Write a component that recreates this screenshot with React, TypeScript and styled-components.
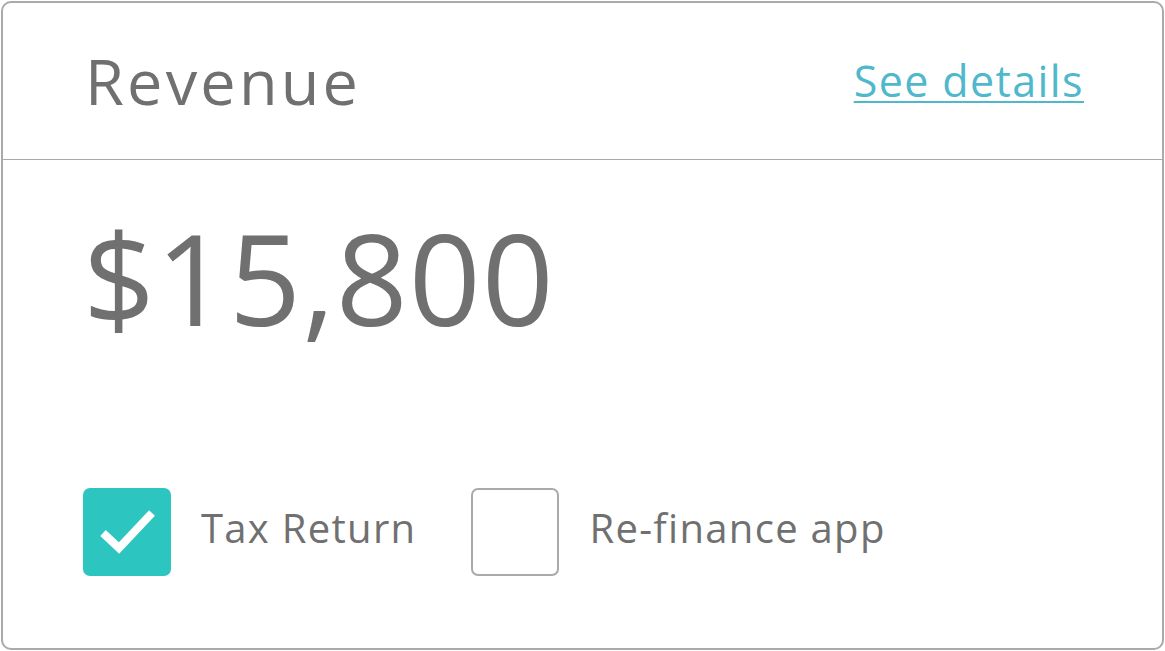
import styled, { createGlobalStyle } from "styled-components";

const GlobalStyle = createGlobalStyle`
  html, body {
    margin: 0;
    padding: 0;
    background: #fff;
  }
  body {
    font-family: "Open Sans", "Liberation Sans", sans-serif;
    color: #707070;
  }
`;

const options = [
  { label: "Tax Return", checked: true },
  { label: "Re-finance app", checked: false },
];

export default function App() {
  return (
    <>
      <GlobalStyle />
      <Card>
        <Header>
          <Title>Revenue</Title>
          <DetailsLink href="#">See details</DetailsLink>
        </Header>
        <Body>
          <Amount>$15,800</Amount>
          <Options>
            {options.map((o) => (
              <Option key={o.label}>
                <Box $checked={o.checked}>
                  {o.checked && (
                    <svg width="88" height="88" viewBox="0 0 88 88">
                      <path
                        d="M20 45 L36 60 L69 25"
                        fill="none"
                        stroke="#fff"
                        strokeWidth="8"
                      />
                    </svg>
                  )}
                </Box>
                <Label>{o.label}</Label>
              </Option>
            ))}
          </Options>
        </Body>
      </Card>
    </>
  );
}

const Card = styled.div`
  box-sizing: border-box;
  margin: 1px;
  width: 1163px;
  height: 649px;
  border: 2px solid #aaaaaa;
  border-radius: 10px;
  display: flex;
  flex-direction: column;
`;

const Header = styled.div`
  box-sizing: border-box;
  height: 157px;
  border-bottom: 1px solid #aaaaaa;
  display: flex;
  align-items: center;
  justify-content: space-between;
  padding: 0 78px 2px 82px;
`;

const Title = styled.h1`
  margin: 0;
  font-size: 63px;
  font-weight: 400;
  letter-spacing: 3.2px;
  color: #707070;
`;

const DetailsLink = styled.a`
  font-size: 43px;
  color: #4fb8cc;
  text-decoration: underline;
  text-decoration-thickness: 2px;
  text-underline-offset: 4px;
  letter-spacing: 1.4px;
`;

const Body = styled.div`
  flex: 1;
  display: flex;
  flex-direction: column;
  justify-content: space-between;
  padding: 54px 0 72px 80px;
`;

const Amount = styled.div`
  font-size: 126px;
  line-height: 1;
  color: #707070;
  letter-spacing: 1px;
`;

const Options = styled.div`
  display: flex;
  align-items: center;
  gap: 55px;
`;

const Option = styled.label`
  display: flex;
  align-items: center;
  gap: 30px;
`;

const Box = styled.span<{ $checked: boolean }>`
  box-sizing: border-box;
  width: 88px;
  height: 88px;
  border-radius: 7px;
  background: ${(p) => (p.$checked ? "#2cc5c0" : "#fff")};
  border: ${(p) => (p.$checked ? "none" : "2px solid #aaaaaa")};
  display: flex;
  svg {
    display: block;
  }
`;

const Label = styled.span`
  font-size: 40px;
  color: #707070;
  letter-spacing: 1.3px;
  padding-bottom: 10px;
`;
